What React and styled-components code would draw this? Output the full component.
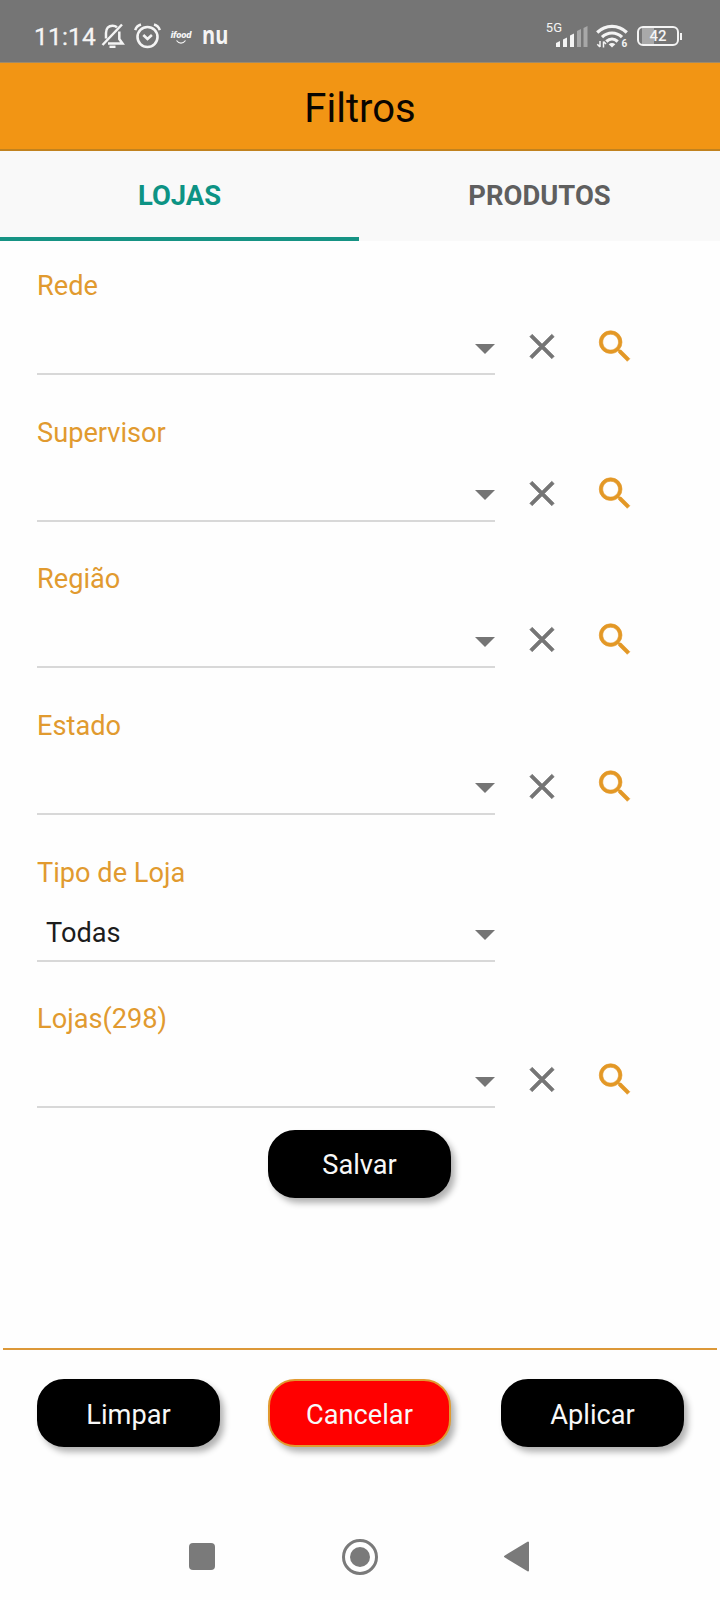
import React, { useState } from 'react'
import styled, { createGlobalStyle } from 'styled-components'
import { MdSearch, MdClose } from 'react-icons/md'

const GlobalStyle = createGlobalStyle`
  * {
    box-sizing: border-box;
  }
  body {
    margin: 0;
    background: #fefefe;
    font-family: Roboto, "Liberation Sans", sans-serif;
  }
  button {
    font-family: inherit;
    padding: 0;
    border: none;
    background: none;
  }
`

const Screen = styled.div`
  width: 720px;
  height: 1600px;
  display: flex;
  flex-direction: column;
  overflow: hidden;
`

const StatusBar = styled.div`
  height: 63px;
  flex-shrink: 0;
  display: flex;
  align-items: center;
  justify-content: space-between;
  padding: 10px 38px 0 34px;
  background: #757575;
  color: #f4f4f4;
  border-bottom: 1px solid #a08a68;
`

const StatusGroup = styled.div`
  display: flex;
  align-items: center;
  svg {
    display: block;
  }
`

const Clock = styled.span`
  width: 67px;
  padding-top: 1px;
  font-size: 24.5px;
  line-height: 30px;
  letter-spacing: 0.2px;
  -webkit-text-stroke: 0.3px #f4f4f4;
  white-space: nowrap;
`

const IconGap = styled.span`
  width: ${(p) => p.$size}px;
`

const IfoodLogo = styled.div`
  width: 24px;
  height: 16px;
  margin: 3px 9px 0 8px;
  display: flex;
  flex-direction: column;
  align-items: center;
  font-size: 9.5px;
  line-height: 10px;
  font-weight: 900;
  font-style: italic;
  letter-spacing: -0.2px;
`

const NuLogo = styled.span`
  font-family: "Open Sans", Roboto, sans-serif;
  font-size: 25px;
  line-height: 25px;
  font-weight: 700;
  margin-top: -3px;
  transform: scaleX(0.8);
  transform-origin: left;
`

const Network = styled.span`
  align-self: flex-start;
  font-size: 13px;
  line-height: 14px;
  margin: -1px -7px 0 0;
`

const Battery = styled.div`
  display: flex;
  align-items: center;
  margin-left: 7px;
`

const BatteryBody = styled.div`
  width: 42px;
  height: 20px;
  border: 2px solid #f4f4f4;
  border-radius: 6px;
  display: flex;
  align-items: center;
  justify-content: center;
  font-size: 15px;
  line-height: 16px;
  font-weight: 500;
  background: linear-gradient(90deg, transparent 3px, #a9a9a9 3px, #a9a9a9 15px, transparent 15px);
`

const BatteryTip = styled.span`
  width: 2px;
  height: 7px;
  margin-left: 1px;
  background: #f4f4f4;
`

const Header = styled.header`
  height: 88px;
  flex-shrink: 0;
  display: flex;
  align-items: center;
  justify-content: center;
  padding-top: 5px;
  background: #f29514;
  border-bottom: 2px solid #c1821f;
  font-size: 40px;
  line-height: 46px;
  color: #0a0500;
`

const Tabs = styled.div`
  display: grid;
  grid-template-columns: 359px 361px;
  height: 90px;
  flex-shrink: 0;
  background: #f9f9f9;
`

const Tab = styled.button`
  font-size: 27.4px;
  font-weight: 700;
  padding-top: 4px;
  color: ${(p) => (p.$active ? '#0d9384' : '#5f5f5f')};
  border-bottom: 4px solid ${(p) => (p.$active ? '#169384' : 'transparent')};
`

const Form = styled.main`
  flex: 1;
  display: flex;
  flex-direction: column;
  padding-left: 37px;
`

const Field = styled.div`
  height: 146.67px;
  padding-top: 28px;
`

const Label = styled.div`
  height: 34px;
  font-size: 27.2px;
  line-height: 34.5px;
  color: #e19a2f;
`

const Control = styled.div`
  display: flex;
  height: 72px;
`

const Select = styled.div`
  width: 458px;
  display: flex;
  align-items: center;
  justify-content: space-between;
  padding: 17px 0 0 9px;
  border-bottom: 2px solid #d8d8d8;
  font-size: 27.2px;
  color: #1c1c1c;
`

const Arrow = styled.span`
  margin: 4px 0 0 auto;
  border: 10px solid transparent;
  border-top-color: #757575;
  border-bottom-width: 0;
`

const IconButton = styled.button`
  display: flex;
  align-items: center;
  justify-content: center;
  width: 42px;
  padding-top: 15px;
  margin-left: ${(p) => p.$gap}px;
  color: ${(p) => p.$color};
  path:last-child {
    stroke: currentColor;
    stroke-width: 0.35px;
  }
`

const Button = styled.button`
  width: 183px;
  height: 68px;
  padding-top: 3px;
  border-radius: 27px;
  background: ${(p) => (p.$danger ? '#ff0000' : '#000')};
  border: 2px solid ${(p) => (p.$danger ? '#e19a2f' : '#000')};
  box-shadow: 4px 5px 6px rgba(0, 0, 0, 0.3);
  color: #f8f8f8;
  font-size: 27.2px;
  line-height: 32px;
`

const SaveRow = styled.div`
  padding: 9px 0 0 231px;
`

const Footer = styled.footer`
  height: 134px;
  flex-shrink: 0;
  margin: 0 3px;
  padding: 29px 33px 0 34px;
  display: grid;
  grid-template-columns: 231px 233px 183px;
  align-items: start;
  border-top: 2px solid #dc9838;
`

const NavBar = styled.nav`
  height: 118px;
  flex-shrink: 0;
  display: flex;
  align-items: center;
  justify-content: space-between;
  padding: 31px 191px 0 189px;
`

function BellOff() {
    return (
        <svg width="24" height="26" viewBox="0 0 24 26" fill="none" stroke="#f4f4f4" strokeWidth="2.5">
            <path d="M5 15.5V10C5 5.5 7.5 2.7 11.5 2.7C13.3 2.7 14.800 3.2 16 4.2" />
            <path d="M18.3 8.5V16L21.5 20.4H7" />
            <path d="M21 1.5L1.5 22" />
            <path d="M8.5 23.8h6" strokeWidth="2.4" />
        </svg>
    )
}

function Alarm() {
    return (
        <svg width="27" height="26" viewBox="0 0 27 26" fill="none" stroke="#f4f4f4" strokeWidth="2.6">
            <circle cx="13.5" cy="14" r="10" />
            <path d="M9.3 12l4.2 4 4.4-4" />
            <path d="M1.2 7.2C2 4.5 4 2.5 7 1.6M25.8 7.2C25 4.5 23 2.5 20 1.6" />
        </svg>
    )
}

function Signal() {
    return (
        <svg width="33" height="22" viewBox="0 0 33 22" fill="#f4f4f4">
            <path d="M1 18l4-2V22H1zM8 14.5l4-2V22h-4zM15 10.5l4-2V22h-4z" />
            <path d="M22 6l4-2v18h-4zM28.5 3l4-2v21h-4z" fill="#a8a8a8" />
        </svg>
    )
}

function Wifi() {
    return (
        <svg width="34" height="28" viewBox="0 -2 34 28" fill="none" stroke="#f4f4f4" strokeWidth="3.2">
            <path d="M1.2 8.5C9.5 0.3 22.5 0.3 30.8 8.5" />
            <path d="M6 13.2C11.8 7.6 20.2 7.6 26 13.2" />
            <path d="M10.3 17.5C13.8 14.3 18.2 14.3 21.7 17.5" />
            <path d="M16 23.5l-3.3-3.2c2-1.6 4.6-1.6 6.6 0z" fill="#f4f4f4" stroke="none" />
            <path d="M4 17v6M1.3 20.2L4 23M7.5 23.5v-6M7.5 17.5l2.5 2.5" strokeWidth="1.5" />
            <text x="25.5" y="23" fontSize="10" fontWeight="700" fill="#f4f4f4" stroke="none">6</text>
        </svg>
    )
}

const fields = [
    { label: 'Rede', actions: true },
    { label: 'Supervisor', actions: true },
    { label: 'Região', actions: true },
    { label: 'Estado', actions: true },
    { label: 'Tipo de Loja', value: 'Todas' },
    { label: 'Lojas(298)', actions: true },
]

function FilterField({ label, value, actions }) {
    return (
        <Field>
            <Label>{label}</Label>
            <Control>
                <Select>
                    {value}
                    <Arrow />
                </Select>
                {actions && (
                    <>
                        <IconButton $gap={26} $color="#757575"><MdClose size={43} /></IconButton>
                        <IconButton $gap={31} $color="#e39826"><MdSearch size={43} /></IconButton>
                    </>
                )}
            </Control>
        </Field>
    )
}

function App() {
    const [tab, setTab] = useState('lojas')

    return (
        <Screen>
            <GlobalStyle />
            <StatusBar>
                <StatusGroup>
                    <Clock>11:14</Clock>
                    <BellOff />
                    <IconGap $size={9} />
                    <Alarm />
                    <IfoodLogo>
                        ifood
                        <svg width="10" height="4" fill="none" stroke="#f4f4f4" strokeWidth="1.2">
                            <path d="M0.5 0.5C3 4 7 4 9.5 0.5" />
                        </svg>
                    </IfoodLogo>
                    <NuLogo>nu</NuLogo>
                </StatusGroup>
                <StatusGroup>
                    <Network>5G</Network>
                    <Signal />
                    <IconGap $size={8} />
                    <Wifi />
                    <Battery>
                        <BatteryBody>42</BatteryBody>
                        <BatteryTip />
                    </Battery>
                </StatusGroup>
            </StatusBar>
            <Header>Filtros</Header>
            <Tabs>
                <Tab $active={tab === 'lojas'} onClick={() => setTab('lojas')}>LOJAS</Tab>
                <Tab $active={tab === 'produtos'} onClick={() => setTab('produtos')}>PRODUTOS</Tab>
            </Tabs>
            <Form>
                {fields.map((f) => (
                    <FilterField key={f.label} {...f} />
                ))}
                <SaveRow>
                    <Button>Salvar</Button>
                </SaveRow>
            </Form>
            <Footer>
                <Button>Limpar</Button>
                <Button $danger>Cancelar</Button>
                <Button>Aplicar</Button>
            </Footer>
            <NavBar>
                <svg width="26" height="27">
                    <rect width="26" height="27" rx="4" fill="#7a7a7a" />
                </svg>
                <svg width="36" height="36" fill="#7a7a7a">
                    <circle cx="18" cy="18" r="16.5" fill="none" stroke="#7a7a7a" strokeWidth="3" />
                    <circle cx="18" cy="18" r="10" />
                </svg>
                <svg width="25" height="31" fill="#7a7a7a" stroke="#7a7a7a" strokeWidth="2" strokeLinejoin="round">
                    <path d="M1 15.5L24 1.5V29.5z" />
                </svg>
            </NavBar>
        </Screen>
    )
}

export default App
